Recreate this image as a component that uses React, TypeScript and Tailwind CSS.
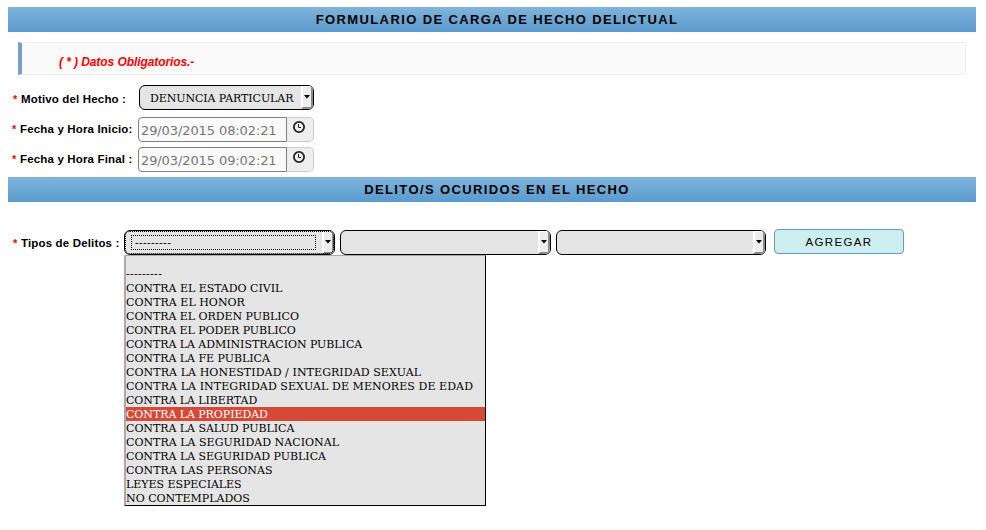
import React from "react";

const DELITOS = [
  { name: "---------", spacing: "tracking-[0.3px]" },
  { name: "CONTRA EL ESTADO CIVIL", spacing: "tracking-[-0.03px]" },
  { name: "CONTRA EL HONOR", spacing: "tracking-[0.03px]" },
  { name: "CONTRA EL ORDEN PUBLICO", spacing: "tracking-[-0.04px]" },
  { name: "CONTRA EL PODER PUBLICO", spacing: "tracking-[-0.08px]" },
  { name: "CONTRA LA ADMINISTRACION PUBLICA", spacing: "tracking-[-0.05px]" },
  { name: "CONTRA LA FE PUBLICA", spacing: "tracking-[-0.04px]" },
  { name: "CONTRA LA HONESTIDAD / INTEGRIDAD SEXUAL", spacing: "tracking-[0.08px]" },
  { name: "CONTRA LA INTEGRIDAD SEXUAL DE MENORES DE EDAD", spacing: "tracking-[0.08px]" },
  { name: "CONTRA LA LIBERTAD", spacing: "tracking-[-0.06px]" },
  { name: "CONTRA LA PROPIEDAD", spacing: "tracking-[-0.06px]" },
  { name: "CONTRA LA SALUD PUBLICA", spacing: "tracking-[-0.04px]" },
  { name: "CONTRA LA SEGURIDAD NACIONAL", spacing: "tracking-[0.02px]" },
  { name: "CONTRA LA SEGURIDAD PUBLICA", spacing: "tracking-[-0.03px]" },
  { name: "CONTRA LAS PERSONAS", spacing: "tracking-[0.04px]" },
  { name: "LEYES ESPECIALES", spacing: "tracking-[-0.04px]" },
  { name: "NO CONTEMPLADOS", spacing: "tracking-normal" },
];

function Bar({ children }: { children: React.ReactNode }) {
  return (
    <h2 className="h-[25px] bg-linear-to-b from-[#80b4da] to-[#5a9acd] pl-[10px] text-center text-[13px] leading-[25px] font-bold tracking-[1.38px] text-black">
      {children}
    </h2>
  );
}

function Label({ children, className }: { children: string; className: string }) {
  return (
    <label className={`flex shrink-0 text-[11.5px] leading-[25px] font-bold tracking-[0.16px] whitespace-pre text-black ${className}`}>
      <span className="w-[8px] text-[11px] text-[#ff0000]">*</span>
      {children}
    </label>
  );
}

function Select({ className, focused, children }: { className: string; focused?: boolean; children?: React.ReactNode }) {
  return (
    <div
      className={`flex h-[25px] shrink-0 overflow-hidden rounded-[6px] border border-black bg-[#e5e5e5] font-['DejaVu_Serif',serif] text-[11px] text-black ${focused ? "outline-1 -outline-offset-2 outline-dotted outline-black" : ""} ${className}`}
    >
      <div className="flex grow items-center whitespace-pre">{children}</div>
      <div className="flex w-[12px] shrink-0 items-center justify-center border-t-1 border-r-2 border-b-2 border-l-2 border-t-white border-r-[#8a8a8a] border-b-[#8a8a8a] border-l-white bg-[#ededed]">
        <svg width="6" height="4" viewBox="0 0 6 4" className="shrink-0">
          <path d="M0 0h6L3 3.5z" fill="#000" />
        </svg>
      </div>
    </div>
  );
}

function DateField({ value }: { value: string }) {
  return (
    <div className="flex h-[25px]">
      <div className="w-[149px] rounded-l-[4px] border border-[#808080] bg-[#fafafa] pl-[2px] font-['DejaVu_Sans',sans-serif] text-[13px] leading-[25px] tracking-[-0.1px] whitespace-pre text-[#777]">
        {value}
      </div>
      <div className="w-[27px] rounded-r-[5px] border border-l-0 border-[#ccc] bg-[#eee] pt-[3px] pl-[6px]">
        <svg width="12" height="12" viewBox="0 0 12 12" fill="none" stroke="#222">
          <circle cx="6" cy="6" r="5.1" strokeWidth="1.8" />
          <path d="M5.5 3v3.5H8" strokeWidth="1" />
        </svg>
      </div>
    </div>
  );
}

export default function App() {
  return (
    <main className="h-[530px] w-[986px] bg-white px-[8px] pt-[7px] pr-[10px] font-['Liberation_Sans',Arial,sans-serif]">
      <Bar>FORMULARIO DE CARGA DE HECHO DELICTUAL</Bar>
      <p className="mx-[10px] mt-[10px] h-[33px] border border-l-4 border-[#f0f0f0] border-l-[#7b9dc9] bg-[#fafafa] pl-[37px] text-[12px] leading-[38px] font-bold tracking-[-0.08px] text-[#ff0000] italic">
        ( * ) Datos Obligatorios.-
      </p>
      <div className="mt-[10px] flex pl-[5px]">
        <Label className="w-[126px] pt-[2px]">Motivo del Hecho :</Label>
        <Select className="w-[175px]">
          <span className="pt-[4px] pl-[10px] tracking-[-0.08px]">DENUNCIA PARTICULAR</span>
        </Select>
      </div>
      <div className="mt-[5px] flex pl-[4px]">
        <Label className="w-[126px]">Fecha y Hora Inicio:</Label>
        <DateField value="29/03/2015 08:02:21" />
      </div>
      <div className="mt-[5px] mb-[5px] flex pl-[4px]">
        <Label className="w-[126px]">Fecha y Hora Final :</Label>
        <DateField value="29/03/2015 09:02:21" />
      </div>
      <Bar>DELITO/S OCURIDOS EN EL HECHO</Bar>
      <div className="mt-[27px] flex items-start pl-[5px]">
        <Label className="w-[111px] pt-[2px]">Tipos de Delitos :</Label>
        <div className="relative mt-px mr-[5px]">
          <Select className="w-[211px]" focused>
            <span className="ml-[6px] flex h-[15px] w-[185px] items-center border border-dotted border-black pt-[4px] pl-[3px] tracking-[0.3px]">
              ---------
            </span>
          </Select>
          <ul className="absolute top-[25px] left-0 h-[251px] w-[362px] border-t border-r border-b border-l-2 border-black border-t-[#aaa] border-l-[#aaa] bg-[#e5e5e5] pt-[11px] font-['DejaVu_Serif',serif] text-[11px] leading-[16px] text-black">
            {DELITOS.map(({ name, spacing }) => (
              <li
                key={name}
                className={`h-[14px] whitespace-pre ${spacing} ${name === "CONTRA LA PROPIEDAD" ? "bg-[#d64937] text-white" : ""}`}
              >
                {name}
              </li>
            ))}
          </ul>
        </div>
        <Select className="mt-px mr-[5px] w-[211px]" />
        <Select className="mt-px mr-[8px] w-[210px]" />
        <button className="h-[25px] w-[130px] rounded-[4px] border border-[#6699c4] bg-[#cceeee] text-[11.5px] leading-[22px] tracking-[1.35px] text-black">
          AGREGAR
        </button>
      </div>
    </main>
  );
}
